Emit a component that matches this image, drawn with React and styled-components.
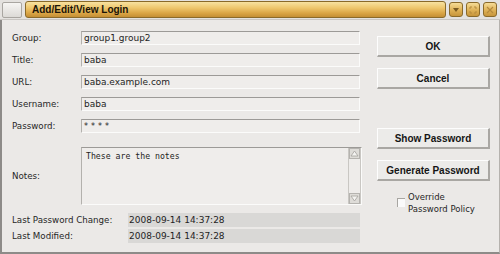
import React from 'react'
import styled, { createGlobalStyle } from 'styled-components'

const Global = createGlobalStyle`
  html, body { margin: 0; padding: 0; background: #ebe9e7; }
  body { width: 500px; height: 254px; overflow: hidden; }
`

const Window = styled.div`
  width: 500px;
  height: 254px;
  box-sizing: border-box;
  display: flex;
  flex-direction: column;
  background: #ebe9e7;
  font-family: "DejaVu Sans", sans-serif;
  color: #222;
`

const TitleBar = styled.div`
  height: 20px;
  display: flex;
  align-items: center;
  gap: 3px;
  padding: 0 3px 0 2px;
  background: #e4e2df;
  border-bottom: 1px solid #c9c6c2;
  box-sizing: border-box;
`

const MenuBox = styled.div`
  width: 18px;
  height: 14px;
  background: linear-gradient(#f6f5f3, #dcdad6);
  border: 1px solid #a9a6a1;
  border-radius: 2px;
`

const TitleStrip = styled.div`
  flex: 1;
  height: 15px;
  display: flex;
  align-items: center;
  padding-left: 6px;
  border: 1px solid #8a6a2a;
  border-radius: 3px;
  background: linear-gradient(#f8e2a0 0%, #eec66c 40%, #d9a444 75%, #c48f35 100%);
  font-family: "Liberation Sans", Arial, sans-serif;
  font-weight: bold;
  font-size: 10px;
  color: #1a1408;
`

const TitleButton = styled.div`
  width: 14px;
  height: 15px;
  display: flex;
  align-items: center;
  justify-content: center;
  border: 1px solid #8a6a2a;
  border-radius: 3px;
  background: linear-gradient(#f6dc96, #dcae52 60%, #c7953b);
  box-sizing: border-box;
`

const Body = styled.div`
  flex: 1;
  display: flex;
  border-left: 2px solid #8d8b88;
  border-bottom: 2px solid #8d8b88;
  border-right: 1px solid #b5b2ae;
`

const Form = styled.div`
  width: 365px;
  padding: 11px 0 0 10px;
  display: flex;
  flex-direction: column;
`

const Row = styled.div`
  display: flex;
  align-items: center;
  height: ${p => p.h || 14}px;
  margin-bottom: ${p => p.mb ?? 8}px;
`

const Label = styled.div`
  width: ${p => p.w || 69}px;
  font-size: 8.7px;
  color: #262626;
`

const Field = styled.div`
  width: 279px;
  height: 14px;
  box-sizing: border-box;
  display: flex;
  align-items: center;
  padding-left: 2px;
  font-size: ${p => (p.secret ? 8 : 9)}px;
  color: #1e1e1e;
  background: #efedeb;
  border-top: 1px solid #9c9a97;
  border-left: 1px solid #b3b1ad;
  border-bottom: 1px solid #fbfbfa;
  border-right: 1px solid #fbfbfa;
  letter-spacing: ${p => (p.secret ? '3px' : '0')};
`

const Notes = styled.div`
  width: 281px;
  height: 58px;
  box-sizing: border-box;
  display: flex;
  background: #efedeb;
  border-top: 1px solid #9c9a97;
  border-left: 1px solid #b3b1ad;
  border-bottom: 1px solid #fbfbfa;
  border-right: 1px solid #fbfbfa;
`

const NotesText = styled.div`
  flex: 1;
  padding: 3px 0 0 4px;
  font-family: "DejaVu Sans Mono", monospace;
  font-size: 8.2px;
  color: #1e1e1e;
`

const ScrollBar = styled.div`
  width: 11px;
  display: flex;
  flex-direction: column;
  justify-content: space-between;
  border-left: 1px solid #c9c7c3;
  border-right: 1px solid #c9c7c3;
  background: #eeecea;
`

const Arrow = styled.div`
  height: 11px;
  display: flex;
  align-items: center;
  justify-content: center;
  background: #dedcd8;
  border: 1px solid #b5b3af;
  box-sizing: border-box;
`

const DateField = styled.div`
  width: 232px;
  height: 14px;
  display: flex;
  align-items: center;
  padding-left: 1px;
  box-sizing: border-box;
  background: #d9d8d6;
  font-size: 9px;
  color: #1e1e1e;
`

const Side = styled.div`
  flex: 1;
  display: flex;
  flex-direction: column;
  padding: 16px 0 0 0;
`

const Button = styled.div`
  width: 113px;
  height: 21px;
  box-sizing: border-box;
  margin-top: ${p => p.mt || 0}px;
  display: flex;
  align-items: center;
  justify-content: center;
  white-space: nowrap;
  font-family: "Liberation Sans", Arial, sans-serif;
  font-weight: bold;
  font-size: 10px;
  color: #151515;
  background: #ecebe9;
  border-top: 1px solid #fdfdfd;
  border-left: 1px solid #fdfdfd;
  border-right: 2px solid #a9a7a3;
  border-bottom: 2px solid #a9a7a3;
`

const Check = styled.div`
  display: flex;
  align-items: flex-start;
  margin: 10px 0 0 20px;
  font-size: 8.5px;
  line-height: 12px;
  color: #262626;
`

const Box = styled.div`
  width: 7px;
  height: 8px;
  margin: 7px 3px 0 0;
  background: #fafafa;
  border-top: 1px solid #a8a6a2;
  border-left: 1px solid #a8a6a2;
`

export default function App() {
  return (
    <Window>
      <Global />
      <TitleBar>
        <MenuBox />
        <TitleStrip>Add/Edit/View Login</TitleStrip>
        <TitleButton>
          <svg width="8" height="6" viewBox="0 0 8 6"><path d="M1 1h6L4 5z" fill="#7a5a20" /></svg>
        </TitleButton>
        <TitleButton>
          <svg width="8" height="8" viewBox="0 0 8 8" fill="none" stroke="#b58a3c" strokeWidth="1"><path d="M1 3V1h2M5 1h2v2M7 5v2H5M3 7H1V5" /></svg>
        </TitleButton>
        <TitleButton>
          <svg width="8" height="8" viewBox="0 0 8 8" stroke="#b58a3c" strokeWidth="1.2"><path d="M1 1l6 6M7 1L1 7" /></svg>
        </TitleButton>
      </TitleBar>
      <Body>
        <Form>
          <Row><Label>Group:</Label><Field>group1.group2</Field></Row>
          <Row><Label>Title:</Label><Field>baba</Field></Row>
          <Row><Label>URL:</Label><Field>baba.example.com</Field></Row>
          <Row><Label>Username:</Label><Field>baba</Field></Row>
          <Row mb={14}><Label>Password:</Label><Field secret>****</Field></Row>
          <Row h={58} mb={7}>
            <Label>Notes:</Label>
            <Notes>
              <NotesText>These are the notes</NotesText>
              <ScrollBar>
                <Arrow>
                  <svg width="9" height="7" viewBox="0 0 9 7"><path d="M4.5 1L8 6H1z" fill="#f4f3f1" stroke="#a3a19d" strokeWidth="0.8" /></svg>
                </Arrow>
                <Arrow>
                  <svg width="9" height="7" viewBox="0 0 9 7"><path d="M4.5 6L8 1H1z" fill="#f4f3f1" stroke="#a3a19d" strokeWidth="0.8" /></svg>
                </Arrow>
              </ScrollBar>
            </Notes>
          </Row>
          <Row h={15} mb={1}><Label w={116}>Last Password Change:</Label><DateField>2008-09-14 14:37:28</DateField></Row>
          <Row h={15} mb={0}><Label w={116}>Last Modified:</Label><DateField>2008-09-14 14:37:28</DateField></Row>
        </Form>
        <Side>
          <Button>OK</Button>
          <Button mt={11}>Cancel</Button>
          <Button mt={39}>Show Password</Button>
          <Button mt={11}>Generate Password</Button>
          <Check>
            <Box />
            <div>Override<br />Password Policy</div>
          </Check>
        </Side>
      </Body>
    </Window>
  )
}
